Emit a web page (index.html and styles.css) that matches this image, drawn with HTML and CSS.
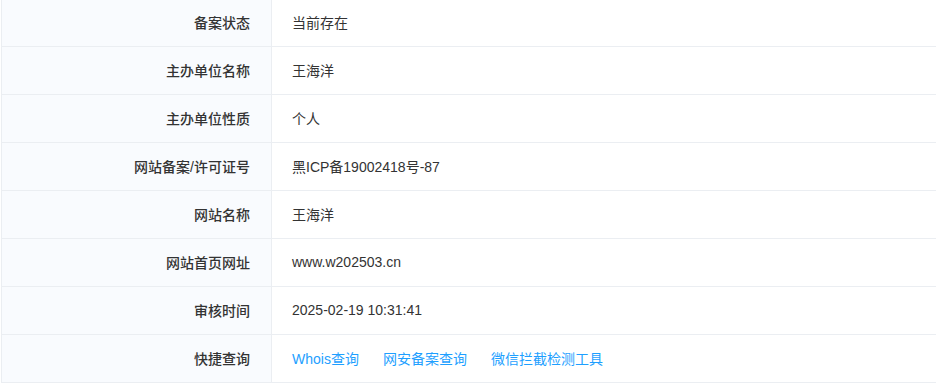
FILE: index.html
```html
<!DOCTYPE html>
<html lang="zh-CN">
<head>
<meta charset="utf-8">
<title>备案信息</title>
<link rel="stylesheet" href="styles.css">
</head>
<body>
<div class="wrap">
<table class="info">
  <tbody>
    <tr><th>备案状态</th><td>当前存在</td></tr>
    <tr><th>主办单位名称</th><td>王海洋</td></tr>
    <tr><th>主办单位性质</th><td>个人</td></tr>
    <tr><th>网站备案/许可证号</th><td>黑ICP备19002418号-87</td></tr>
    <tr><th>网站名称</th><td>王海洋</td></tr>
    <tr><th>网站首页网址</th><td>www.w202503.cn</td></tr>
    <tr><th>审核时间</th><td>2025-02-19 10:31:41</td></tr>
    <tr><th>快捷查询</th><td class="links"><a href="#">Whois查询</a><a href="#">网安备案查询</a><a href="#">微信拦截检测工具</a></td></tr>
  </tbody>
</table>
</div>
</body>
</html>
```
FILE: styles.css
```css
html, body {
  margin: 0;
  padding: 0;
  background: #fff;
  overflow: hidden;
}
.wrap {
  padding-left: 1px;
  margin-top: -2px;
  overflow: hidden;
}
.info {
  border-collapse: collapse;
  width: 1100px;
  font-family: "Liberation Sans", "Noto Sans CJK SC", sans-serif;
  font-size: 14px;
  color: #333;
}
.info th, .info td {
  border: 1px solid #ebeef2;
  height: 48px;
  padding: 0 20px 2px 20px;
  box-sizing: border-box;
  vertical-align: middle;
}
.info th {
  width: 270px;
  text-align: right;
  padding-right: 21px;
  background: #f9fbfe;
  font-weight: 500;
  color: #333;
}
.info td {
  text-align: left;
  font-weight: 400;
}
.links a {
  color: #1e9fff;
  text-decoration: none;
  margin-right: 24px;
}
```
